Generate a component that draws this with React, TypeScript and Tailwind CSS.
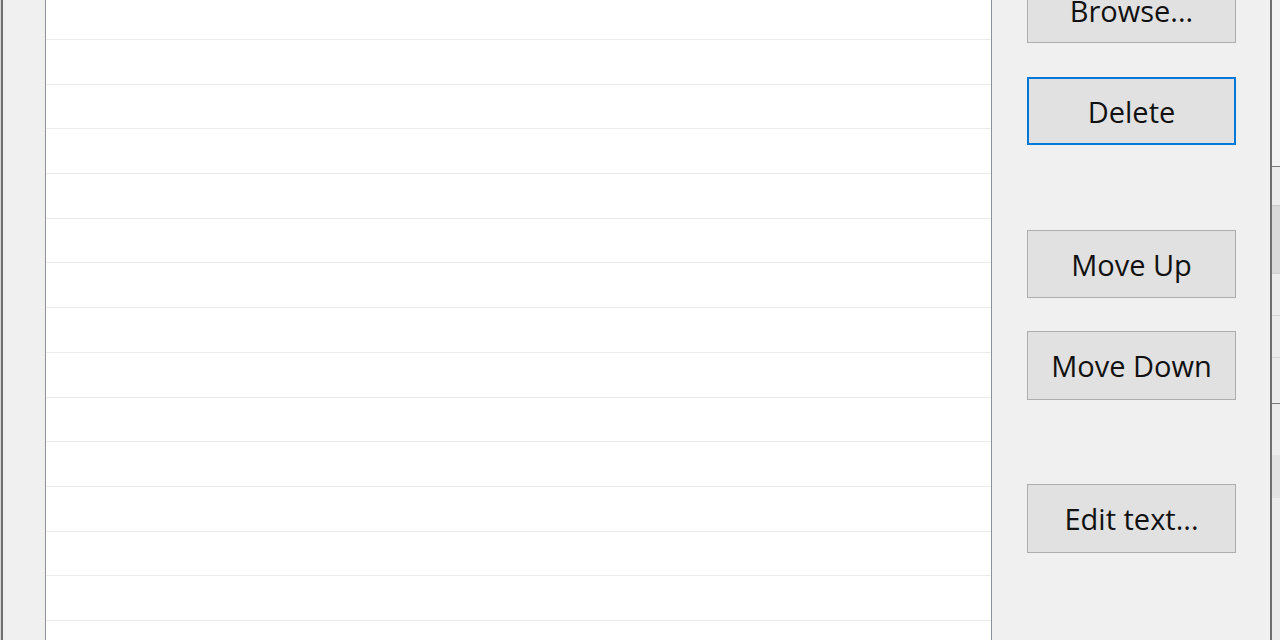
import * as React from "react";

const ROWS = 14;

function DialogButton({
  label,
  focused,
  className,
}: {
  label: string;
  focused?: boolean;
  className?: string;
}) {
  return (
    <button
      type="button"
      className={
        "w-[209px] shrink-0 flex items-center justify-center bg-[#e1e1e1] text-[29px] text-[#111] leading-none " +
        (focused ? "border-2 border-[#0078d7] " : "border border-[#adadad] ") +
        (className ?? "")
      }
    >
      {label}
    </button>
  );
}

export default function App() {
  return (
    <div
      className="w-[1280px] h-[640px] flex overflow-hidden bg-[#f0f0f0] select-none"
      style={{ fontFamily: '"Open Sans", "Noto Sans", sans-serif' }}
    >
      {/* sliver of the window behind, left */}
      <div className="w-[1px] bg-[#d6d6d6]" />
      <div className="w-[2px] bg-[#6f6f6f]" />

      {/* dialog body */}
      <div className="flex-1 flex bg-[#f0f0f0]">
        <div className="w-[42px]" />

        {/* list box */}
        <div className="w-[947px] border-x border-[#8c939d] bg-white flex flex-col">
          <div className="h-[40px] shrink-0 border-b border-[#ebebeb]" />
          {Array.from({ length: ROWS - 1 }).map((_, i) => (
            <div key={i} className="h-[44.69px] shrink-0 border-b border-[#ebebeb]" />
          ))}
        </div>

        {/* buttons */}
        <div className="flex-1 flex flex-col pl-[35px]">
          <DialogButton label="Browse..." className="h-[68px] -mt-[25px] items-start pt-[20px]" />
          <DialogButton label="Delete" focused className="h-[68px] mt-[34px]" />
          <DialogButton label="Move Up" className="h-[68px] mt-[85px]" />
          <DialogButton label="Move Down" className="h-[69px] mt-[33px]" />
          <DialogButton label="Edit text..." className="h-[69px] mt-[84px]" />
        </div>
      </div>

      <div className="w-[2px] bg-[#6f6f6f]" />
      {/* sliver of the window behind, right */}
      <div className="w-[8px] flex flex-col bg-[#f0f0f0]">
        <div className="h-[166px] bg-[#f3f3f3]" />
        <div className="h-[1px] bg-[#7a7a7a]" />
        <div className="h-[38px] bg-[#ececec]" />
        <div className="h-[68px] border-t border-[#c8c8c8] bg-[#d9d9d9]" />
        <div className="h-[42px] border-t border-[#cfcfcf] bg-[#ececec]" />
        <div className="h-[42px] border-t border-[#d6d6d6] bg-[#ececec]" />
        <div className="h-[46px] border-t border-[#d6d6d6] bg-[#ececec]" />
        <div className="h-[1px] bg-[#7a7a7a]" />
        <div className="h-[51px] bg-[#ececec]" />
        <div className="h-[43px] bg-[#e2e2e2]" />
        <div className="flex-1 bg-[#ececec]" />
      </div>
    </div>
  );
}
